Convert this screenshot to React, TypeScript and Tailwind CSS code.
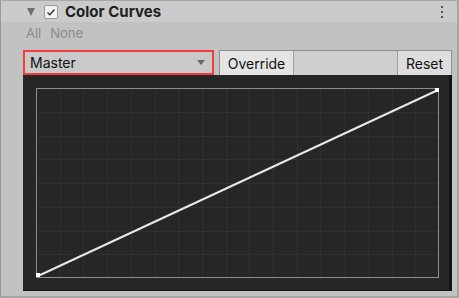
import React from "react";

function Graph() {
  const w = 403;
  const h = 190;
  const cols = 17;
  const rows = 8;
  const vlines = Array.from({ length: cols - 1 }, (_, i) => ((i + 1) * w) / cols);
  const hlines = Array.from({ length: rows - 1 }, (_, i) => ((i + 1) * h) / rows);
  return (
    <svg width={w} height={h} viewBox={`0 0 ${w} ${h}`} className="block">
      <rect x={0} y={0} width={w} height={h} fill="#262626" />
      {vlines.map((x, i) => (
        <line key={"v" + i} x1={Math.round(x) + 0.5} y1={0} x2={Math.round(x) + 0.5} y2={h} stroke="#303030" strokeWidth={1} />
      ))}
      {hlines.map((y, i) => (
        <line key={"h" + i} x1={0} y1={Math.round(y) + 0.5} x2={w} y2={Math.round(y) + 0.5} stroke="#303030" strokeWidth={1} />
      ))}
      <rect x={0.5} y={0.5} width={w - 1} height={h - 1} fill="none" stroke="#8d8d8d" strokeWidth={1} />
      <line x1={2} y1={188} x2={402} y2={2} stroke="#e8e8e8" strokeWidth={2} />
      <rect x={0} y={185} width={4} height={4} fill="#ffffff" />
      <rect x={399} y={0} width={4} height={4} fill="#ffffff" />
    </svg>
  );
}

export default function App() {
  return (
    <div
      className="w-[459px] h-[298px] bg-[#c2c2c2] border-l border-t border-b-2 border-r-2 border-l-[#999999] border-t-[#a9a9a9] border-r-[#a5a5a5] border-b-[#a5a5a5] flex flex-col overflow-hidden"
      style={{ fontFamily: "Inter, 'Noto Sans', sans-serif" }}
    >
      {/* Header */}
      <div className="h-[21px] bg-[#cbcbcb] flex items-center shrink-0 relative">
        <div className="ml-[26px] w-0 h-0 border-l-[4.5px] border-r-[4.5px] border-t-[8px] border-l-transparent border-r-transparent border-t-[#6f6f6f]" />
        <div className="ml-[9px] w-[14px] h-[14px] bg-[#f2f2f2] border border-[#9a9a9a] rounded-[2px] flex items-center justify-center">
          <svg width="10" height="10" viewBox="0 0 10 10">
            <path d="M1.5 5.5 L3.8 7.8 L8.5 2.5" fill="none" stroke="#333" strokeWidth="1.3" />
          </svg>
        </div>
        <span className="ml-[7px] text-[15px] font-bold text-[#1f1f1f] leading-none">Color Curves</span>
        <div className="absolute left-[440px] top-[5px] flex flex-col gap-[3px]">
          <div className="w-[2px] h-[2px] bg-[#555]" />
          <div className="w-[2px] h-[2px] bg-[#555]" />
          <div className="w-[2px] h-[2px] bg-[#555]" />
        </div>
      </div>
      {/* All None */}
      <div className="h-[28px] flex items-start pt-[2px] pl-[25px] gap-[9px] text-[13px] text-[#8b8b8b] shrink-0">
        <span>All</span>
        <span>None</span>
      </div>
      {/* toolbar + panel */}
      <div className="ml-[22px] w-[429px] flex flex-col">
        <div className="h-[25px] flex text-[14px] text-[#111]">
          <div className="w-[191px] h-[25px] border-2 border-[#f03c3c] bg-[#c9c9c9] flex items-center justify-between pl-[5px] pr-[7px]">
            <span>Master</span>
            <div className="w-0 h-0 border-l-[4.5px] border-r-[4.5px] border-t-[5px] border-l-transparent border-r-transparent border-t-[#666]" />
          </div>
          <div className="ml-[5px] flex-1 flex border border-b-0 border-[#8f8f8f]">
            <div className="w-[74px] bg-[#e4e4e4] border-r border-[#a0a0a0] flex items-center justify-center">Override</div>
            <div className="flex-1 bg-[#cfcfcf] border-r border-[#a0a0a0]" />
            <div className="w-[53px] bg-[#dedede] flex items-center justify-center">Reset</div>
          </div>
        </div>
        <div className="h-[216px] bg-[#262626] border-r-[3px] border-b border-[#141414] pl-[13px] pt-[13px]">
          <Graph />
        </div>
      </div>
    </div>
  );
}
